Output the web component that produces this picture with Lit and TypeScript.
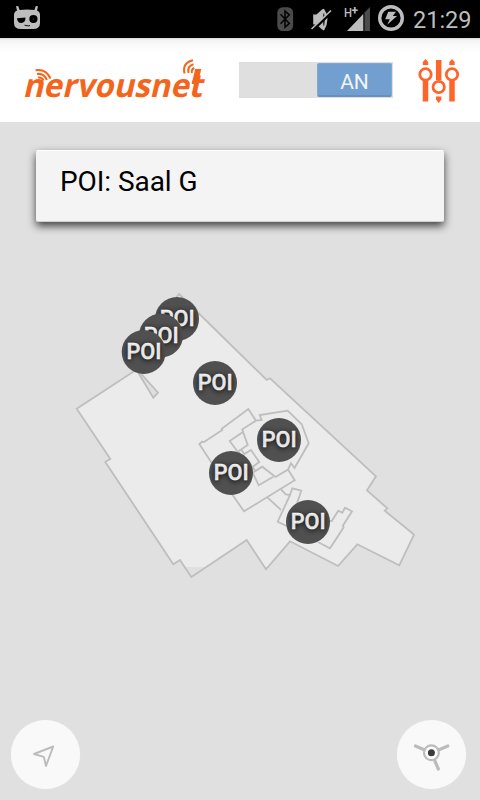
import { LitElement, html, svg, css } from "lit";
import { customElement } from "lit/decorators.js";

const markers = [
  [177, 319], [161, 335.5], [143.7, 352], [215, 383], [279, 440], [231, 473], [308, 522],
];

const outline =
  "M179 294L266.7 380 270 378.3 376 476.3 367 490.3 387.3 508.3 384.7 510.7 410 531.3 414 534.7 399.3 565.3 357.3 544.3 338 566 290 541.3 266 569.3 246.7 540 191.3 577 180 560 173.3 564.3 105.3 462 110.3 459 76.7 408.7 136 370 128 357Z";

const rooms = [
  "M138.3 372.7L153.3 397.7 158 392.7 140.7 373.3",
  "M233.3 496L199.3 444 202 441.7 204 442 222.3 430 221.7 428.7 248.3 409 256 420.7",
  "M243 432L242.3 429.3 256 420.7 261.7 420 259.7 415 287.7 410.7 301.7 424.3 308.7 443.3 294.5 468 291 463.3 288 469.5 275.5 477 262.3 466.7 252.7 472.7 258.7 485.3 273.3 476.7",
  "M288 469.5L294.7 480.3 244 511.3 233.3 496",
  "M229.7 441L243 432 247.7 445 237.7 451.7Z",
  "M241.5 450L244.3 454 251 450 259.3 462 252.7 466.7 255 471M239 452L241 457",
  "M267.3 497.3L281 510M281 489.3L285.7 494.3 290 495 292.3 488.3 301.3 490.7 297 503.3M290 495L277.7 521.7 286.7 526",
  "M318.3 542.3L330 548.3 343.7 527.3 342.7 526 352 511.3 345 507.7 342.3 512.7 338.3 510.7 331.7 521 328 521",
];

@customElement("status-bar")
class StatusBar extends LitElement {
  static styles = css`
    :host { display: block; height: 38px; background: #000; }
    svg { display: block; }
  `;
  render() {
    return html`<svg width="480" height="38" viewBox="0 0 480 38">
      <g fill="#bdbdbd">
        <path d="M16 6.2L18.2 6 19.6 10Q27 8.8 34.4 10L35.8 6 38 6.2 37 10.6Q40 12 40 15V23Q40 29 33 29H21Q14 29 14 23V15Q14 12 17 10.6Z" />
        <g fill="#000"><circle cx="33.4" cy="19" r="4.1" /><path d="M17 18.2L25.5 17.6Q25.5 23 21.3 23 17.3 23 17 18.2Z" /></g>
        <circle cx="33.4" cy="19" r=".6" fill="#555" />
        <path d="M24.5 25.2L29 26 30 25.3" fill="none" stroke="#111" stroke-width="1" />
      </g>
      <rect x="277.3" y="7.2" width="15.8" height="23.8" rx="5.5" fill="#4b4b4b" />
      <path d="M280.5 14.3L289.3 23.5 285 27.2V11L289.3 14.8 280.5 23.8" fill="none" stroke="#050505" stroke-width="1.6" />
      <path d="M313.2 14.5H316.5L322 9.5 324 8.8Q331 19 324 30.5L322 29.5 316.5 24.5H313.2Z" fill="#bdbdbd" />
      <ellipse cx="323.8" cy="19.5" rx="1" ry="6.5" fill="#333" />
      <path d="M312.3 30.8L331.8 11.8" stroke="#000" stroke-width="2.5" />
      <path d="M311.5 29L331 10.5" stroke="#bdbdbd" stroke-width="1.6" />
      <text x="344" y="16.8" font-family="Roboto,sans-serif" font-weight="500" font-size="13" fill="#bdbdbd" textLength="8" lengthAdjust="spacingAndGlyphs">H</text>
      <text x="351.6" y="15.2" font-family="Roboto,sans-serif" font-weight="700" font-size="12" fill="#bdbdbd">+</text>
      <path d="M347 31L363.3 14V31Z" fill="#bdbdbd" />
      <path d="M364.5 12.5L370 7V31H364.5Z" fill="#4b4b4b" />
      <circle cx="391" cy="18" r="11.3" fill="none" stroke="#bdbdbd" stroke-width="3.4" />
      <path d="M388.2 11.8H396L392.8 16H397L387.2 24.8 389.8 19.2H385.2Z" fill="#bdbdbd" />
      <text x="413" y="27.8" font-family="Roboto,sans-serif" font-size="24" fill="#bdbdbd" textLength="58.5" lengthAdjust="spacingAndGlyphs">21:29</text>
    </svg>`;
  }
}

@customElement("app-header")
class AppHeader extends LitElement {
  static styles = css`
    :host {
      display: flex; height: 84px; box-sizing: border-box; padding: 0 19px 0 20px;
      background: linear-gradient(#d5d5d5 0, #f3f3f3 2px, #fafafa 7px, #fff 15px);
    }
    .logo { display: block; width: 190px; height: 84px; }
    .switch {
      display: flex; justify-content: flex-end; box-sizing: border-box;
      width: 154px; height: 36px; margin: 24px 0 0 29px; padding: 1px 1px 1px 0; background: #dfdfdf;
    }
    .thumb {
      width: 75px; height: 34px; box-sizing: border-box; border-radius: 2px;
      background: #729fd0; border: 1px solid #80a9d6; border-bottom: 2px solid #6690be;
      color: #f1f4f8; font: 21px/36px Roboto, sans-serif; text-align: center;
    }
    .tune { display: block; width: 42px; height: 46px; margin: 20px 0 0 25px; }
  `;
  render() {
    return html`
      <svg class="logo" viewBox="20 38 190 84">
        <g transform="translate(0 96.6) skewX(-13)" fill="#f4651b" font-family="'Open Sans','Noto Sans',sans-serif" font-weight="700" font-size="32.5">
          <text x="22.5" y="0" textLength="166" lengthAdjust="spacingAndGlyphs">nervousne</text>
          <text x="188" y="0">t</text>
        </g>
        <path d="M195.2 69H201.2L198 84H191.7Z" fill="#f4651b" />
        <g fill="none" stroke="#f4651b" stroke-width="2">
          <path d="M35.5 70.2Q46 68.5 50.5 78.5M37 74Q44 73 46.8 80M38 77.5Q42 76.8 43.5 80.5" />
          <path d="M193 60.3Q182 63 184.5 73.5M193.5 64.2Q187 66 188.5 73M194.3 68Q191 69.5 192 73" />
        </g>
      </svg>
      <div class="switch"><div class="thumb">AN</div></div>
      <svg class="tune" viewBox="418 58 42 46">
        <g fill="none" stroke="#ff652b">
          <path d="M425.5 81V101.5M438.7 60V80M452 81V101.5" stroke-width="5.5" />
          <circle cx="425.5" cy="74.4" r="5.7" stroke-width="2.8" fill="#fff" />
          <circle cx="438.7" cy="87" r="5.7" stroke-width="2.8" fill="#fff" />
          <circle cx="452" cy="74.4" r="5.7" stroke-width="2.8" fill="#fff" />
        </g>
        <path d="M425.5 59L428.2 62V65H422.8V62ZM452 59L454.7 62V65H449.3V62ZM436 96.5H441.4V99.5L438.7 103 436 99.5Z" fill="#ff652b" />
      </svg>`;
  }
}

@customElement("floor-map")
class FloorMap extends LitElement {
  static styles = css`
    :host, svg { display: block; }
    .label {
      font: 500 22px Roboto, sans-serif; fill: #fff; stroke: #fff; stroke-width: 0.35px;
      text-shadow: 0 1px 5px rgba(0, 0, 0, 0.85);
    }
  `;
  render() {
    return html`<svg width="480" height="424" viewBox="0 284 480 424">
      <defs>
        <clipPath id="fillArea"><rect x="0" y="284" width="480" height="283" /></clipPath>
      </defs>
      <path d=${outline} fill="#ebebeb" clip-path="url(#fillArea)" />
      <path d="M138.3 372.7L153.3 397.7 158 392.7Z" fill="#dfdfdf" />
      <g fill="none" stroke="#bebebe" stroke-width="1.8">
        <path d=${outline} />
        ${rooms.map((d) => svg`<path d=${d} />`)}
      </g>
      ${markers.map(([x, y]) => svg`
        <circle cx=${x} cy=${y} r="22" fill="#505050" />
        <text class="label" x=${x - 17.3} y=${y + 7.3} textLength="35" lengthAdjust="spacingAndGlyphs">POI</text>`)}
    </svg>`;
  }
}

@customElement("app-root")
class AppRoot extends LitElement {
  static styles = css`
    :host {
      display: flex; flex-direction: column; width: 480px; height: 800px;
      background: #e0e0e0; overflow: hidden; font-family: Roboto, sans-serif;
    }
    .card {
      box-sizing: border-box; height: 72px; margin: 28px 36px 62px; padding: 15px 24px;
      background: #f4f4f4; border-radius: 2px; border-top: 1px solid #fff; border-bottom: 1px solid #d0d0d0;
      box-shadow: 0 4px 8px rgba(0, 0, 0, 0.72);
      color: #000; font-size: 28px; line-height: 32px;
    }
    .title { display: block; overflow: visible; }
    .actions { display: flex; justify-content: space-between; padding: 12px 14px 0 11px; }
    .round { width: 69px; height: 69px; border-radius: 50%; background: #f9f9f9; box-shadow: 0 0 1px #eee; }
    .round svg { display: block; }
  `;
  render() {
    return html`
      <status-bar></status-bar>
      <app-header></app-header>
      <div class="card">
        <svg class="title" width="140" height="32"><text x="0" y="25" textLength="137.5">POI: Saal G</text></svg>
      </div>
      <floor-map></floor-map>
      <div class="actions">
        <div class="round">
          <svg width="69" height="69" viewBox="11 720 69 69">
            <path d="M53.2 746.5L34 754 43.8 756.8 46 766Z" fill="none" stroke="#bcbcbc" stroke-width="1.9" stroke-linejoin="round" />
          </svg>
        </div>
        <div class="round">
          <svg width="69" height="69" viewBox="397 720 69 69">
            <path d="M415.5 746L431.5 753 447.8 746M431.5 753L438.3 769" fill="none" stroke="#bcbcbc" stroke-width="3.2" stroke-linecap="round" />
            <circle cx="431.4" cy="752.7" r="7.4" fill="#fff" stroke="#bcbcbc" stroke-width="2.2" />
            <circle cx="431.4" cy="752.8" r="3.5" fill="#3c3c3c" />
          </svg>
        </div>
      </div>`;
  }
}
